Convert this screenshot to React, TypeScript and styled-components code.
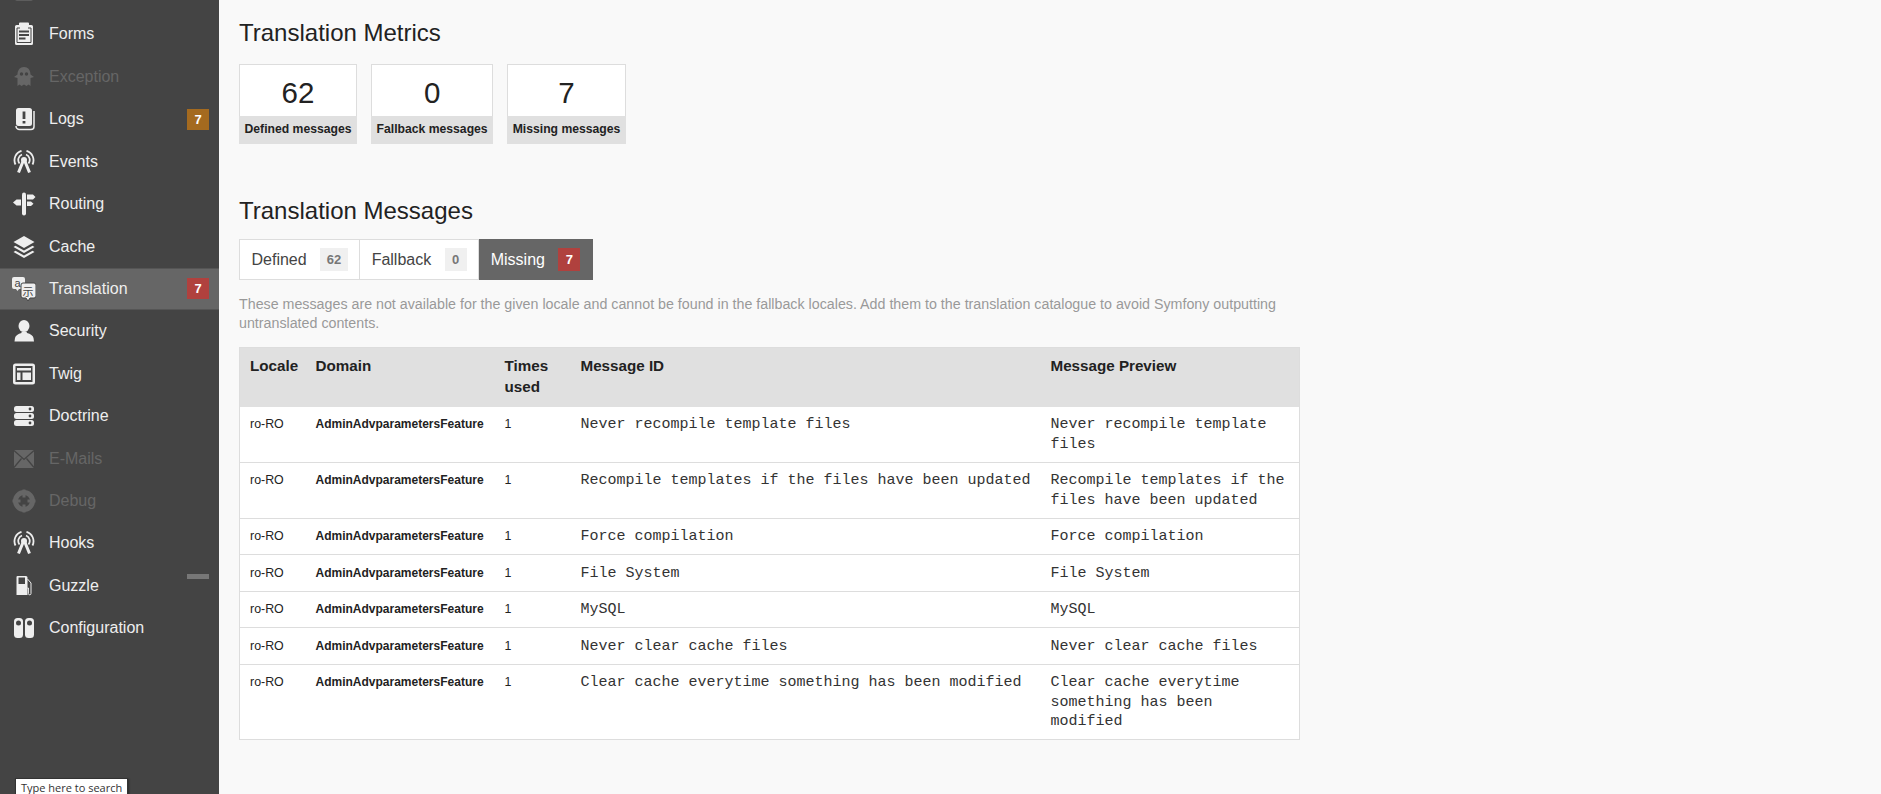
import React from 'react';
import styled, { createGlobalStyle } from 'styled-components';

const GlobalStyle = createGlobalStyle`
  html, body {
    margin: 0;
    height: 100%;
    overflow: hidden;
    background: #f9f9f9;
    color: #222;
    font-family: 'Liberation Sans', Arial, sans-serif;
  }
`;

const Page = styled.div`
  display: flex;
  height: 794px;
  overflow: hidden;
  position: relative;
`;

const Sidebar = styled.nav`
  flex: 0 0 219px;
  background: #444;
  overflow: hidden;
  padding-top: 13.2px;
`;

const MenuRow = styled.div<{ $active?: boolean; $disabled?: boolean }>`
  display: flex;
  align-items: center;
  height: 42.43px;
  box-sizing: border-box;
  padding: 0 10px 0 12px;
  font-size: 16px;
  color: ${(p) => (p.$disabled ? '#666' : '#eee')};
  background: ${(p) => (p.$active ? '#666' : 'transparent')};
  ${(p) => p.$active && 'border-top: 1px solid #555; border-bottom: 1px solid #555;'}
`;

const ClippedRow = styled(MenuRow)`
  margin-top: -29.2px;
  height: 29.2px;
  align-items: flex-end;
`;

const IconBox = styled.svg`
  width: 24px;
  height: 24px;
  flex: 0 0 24px;
  margin-right: 13px;
  fill: currentColor;
`;

const MenuLabel = styled.span`
  flex: 1;
`;

const MenuCount = styled.span<{ $tone: 'warning' | 'error' }>`
  width: 22px;
  height: 21px;
  line-height: 21px;
  text-align: center;
  font-size: 13px;
  font-weight: bold;
  color: #fff;
  background: ${(p) => (p.$tone === 'warning' ? '#a46a1f' : '#b0413e')};
`;

const EmptyCount = styled.span`
  width: 22px;
  height: 5px;
  background: #777;
  margin-top: -19px;
`;

const SearchTip = styled.div`
  position: absolute;
  left: 15px;
  top: 778px;
  width: 113px;
  height: 22px;
  box-sizing: border-box;
  background: #fff;
  border: 1px solid #333;
  padding: 1px 0 0 5px;
  font-family: 'Open Sans', sans-serif;
  font-size: 11px;
  line-height: 16px;
  color: #333;
  white-space: nowrap;
  box-shadow: 1px 1px 2px rgba(0, 0, 0, 0.4);
`;

const Main = styled.main`
  flex: 1;
  padding: 18px 0 0 20px;
`;

const SectionTitle = styled.h2`
  margin: 0 0 16px;
  font-size: 24px;
  line-height: 30px;
  font-weight: normal;
  color: #222;
`;

const Metrics = styled.div`
  display: flex;
  gap: 14px;
  margin-bottom: 52.4px;
`;

const Metric = styled.div`
  display: flex;
  flex-direction: column;
  background: #fff;
  border: 1px solid #ddd;
  border-bottom: 0;
  box-sizing: border-box;
  height: 80px;
`;

const MetricValue = styled.div`
  height: 51px;
  text-align: center;
  font-size: 29.5px;
  line-height: 55px;
`;

const MetricLabel = styled.div`
  height: 28px;
  margin: 0 -1px;
  padding: 0 5.5px;
  background: #e0e0e0;
  font-size: 12.2px;
  font-weight: bold;
  line-height: 26px;
  text-align: center;
  white-space: nowrap;
`;

const Tabs = styled.div`
  display: flex;
  width: fit-content;
  margin-top: -3.8px;
`;

const Tab = styled.div<{ $active?: boolean }>`
  display: flex;
  align-items: center;
  height: 41px;
  box-sizing: border-box;
  padding: 0 11.5px;
  gap: 13.5px;
  font-size: 16px;
  line-height: 19px;
  color: ${(p) => (p.$active ? '#fff' : '#444')};
  background: ${(p) => (p.$active ? '#666' : '#fff')};
  border: 1px solid ${(p) => (p.$active ? '#666' : '#ddd')};
  & + & {
    border-left: 0;
  }
`;

const TabBadge = styled.span<{ $error?: boolean }>`
  min-width: 22px;
  height: 23px;
  line-height: 23px;
  padding: 0 6.5px;
  box-sizing: border-box;
  text-align: center;
  font-size: 13px;
  font-weight: bold;
  color: ${(p) => (p.$error ? '#fff' : '#777')};
  background: ${(p) => (p.$error ? '#b0413e' : '#f0f0f0')};
`;

const Help = styled.p`
  width: 1060px;
  margin: 15.2px 0 14px;
  font-size: 14.25px;
  line-height: 19px;
  color: #999;
`;

const Table = styled.table`
  width: 1060px;
  table-layout: fixed;
  border-collapse: collapse;
  background: #fff;
  border: 1px solid #ddd;
`;

const Col = styled.col<{ $w: number }>`
  width: ${(p) => p.$w}px;
`;

const Th = styled.th`
  background: #e0e0e0;
  vertical-align: top;
  text-align: left;
  padding: 7px 10px 10px;
  font-size: 15.2px;
  line-height: 21px;
  font-weight: bold;
  color: #222;
  height: 59px;
  box-sizing: border-box;
`;

const Td = styled.td`
  vertical-align: top;
  padding: 8.5px 10px 7.5px;
  border-bottom: 1px solid #ddd;
  font-size: 12.4px;
  line-height: 19.5px;
  color: #222;
`;

const DomainCell = styled(Td)`
  font-size: 12px;
  font-weight: bold;
  white-space: nowrap;
`;

const MonoCell = styled(Td)`
  padding-right: 6px;
  font-family: 'Liberation Mono', 'Courier New', monospace;
  font-size: 15px;
  color: #333;
`;

const BubbleText = styled.text`
  font-family: 'Liberation Sans', 'Noto Sans CJK SC', sans-serif;
  fill: #444;
`;

const FormsIcon = () => (
  <IconBox viewBox="0 0 24 24">
    <path d="M8 0.500h8a1 1 0 0 1 1 1V3h2.500A1.500 1.500 0 0 1 21 4.500v17a1.500 1.500 0 0 1-1.500 1.500h-15A1.500 1.500 0 0 1 3 21.500v-17A1.500 1.500 0 0 1 4.500 3H7V1.500a1 1 0 0 1 1-1z" />
    <path d="M7 9.500h10M7 13h10M7 16.500h6.500" stroke="#444" strokeWidth="1.800" />
    <path d="M5 20.500V6h3M19 20.500V6h-3M5 20.500h14" fill="none" stroke="#444" strokeWidth="1" />
  </IconBox>
);

const GhostIcon = () => (
  <IconBox viewBox="0 0 24 24">
    <path d="M12 2c4 0 6.500 3 6.500 7.500l3.500 2.500-3.500 1V21l-2-1.500L14.500 21 12 19.500 9.500 21l-2-1.500-2 1.500v-8L2 12l3.500-2.500C5.500 5 8 2 12 2z" />
    <circle cx="9.500" cy="9" r="1.700" fill="#444" />
    <circle cx="14.500" cy="9" r="1.700" fill="#444" />
  </IconBox>
);

const LogsIcon = () => (
  <IconBox viewBox="0 0 24 24">
    <path d="M6.500 1h11A2.500 2.500 0 0 1 20 3.500v13a2.500 2.500 0 0 1-2.500 2.500h-11A2.500 2.500 0 0 1 4 16.500v-13A2.500 2.500 0 0 1 6.500 1z" />
    <path d="M12 4.500v7.500M12 14v2.500" stroke="#444" strokeWidth="2.800" />
    <path d="M22 4v15.500a3 3 0 0 1-3 3H7.500A3.500 3.500 0 0 1 4 19" fill="none" stroke="currentColor" strokeWidth="1.500" />
  </IconBox>
);

const AntennaIcon = () => (
  <IconBox viewBox="0 0 24 24">
    <circle cx="12" cy="10" r="3" />
    <path d="M11 11.500l-4.500 11M13 11.500l4.500 11" stroke="currentColor" strokeWidth="3" fill="none" />
    <path
      d="M7.500 13.500A5.800 5.800 0 0 1 10 4.500M16.500 13.500A5.800 5.800 0 0 0 14 4.500M3.500 14.500A9.800 9.800 0 0 1 9.500 0.800M20.500 14.500A9.800 9.800 0 0 0 14.500 0.800"
      fill="none"
      stroke="currentColor"
      strokeWidth="1.800"
    />
  </IconBox>
);

const RoutingIcon = () => (
  <IconBox viewBox="0 0 24 24">
    <rect x="10" y="0.500" width="4" height="23" rx="2" />
    <path d="M9 7.500H4.500L1 10.500l3.500 3H9z" />
    <path d="M15 2.500h6l2.500 2.500-2.500 2.500h-6zM15 9.500h4l2.500 2.300L19 14h-4z" />
  </IconBox>
);

const CacheIcon = () => (
  <IconBox viewBox="0 0 24 24">
    <path d="M12 1l10.500 6L12 13 1.500 7z" />
    <path d="M3.500 10.800L12 15.600l8.500-4.800 2 1.200L12 18 1.500 12z" />
    <path d="M3.500 15.800L12 20.600l8.500-4.800 2 1.200L12 23 1.500 17z" />
  </IconBox>
);

const TranslationIcon = () => (
  <IconBox viewBox="0 0 24 24">
    <path d="M2 0h9a2 2 0 0 1 2 2v8a2 2 0 0 1-2 2H7l-1.500 2-1.500-2H2a2 2 0 0 1-2-2V2a2 2 0 0 1 2-2z" />
    <path d="M11 6h11a2 2 0 0 1 2 2v11a2 2 0 0 1-2 2h-4l-2 3-2-3h-3a2 2 0 0 1-2-2V8a2 2 0 0 1 2-2z" stroke="#444" strokeWidth="1" />
    <BubbleText x="2.500" y="9.500" fontSize="11">a</BubbleText>
    <BubbleText x="10.500" y="18.500" fontSize="11">示</BubbleText>
  </IconBox>
);

const SecurityIcon = () => (
  <IconBox viewBox="0 0 24 24">
    <ellipse cx="12" cy="7" rx="5.500" ry="6" />
    <path d="M9.500 12.500h5l.5 1.500c3.500 1 6 2.500 6.500 5l.5 3.500H2.500l.5-3.500c.5-2.500 3-4 6.500-5z" />
  </IconBox>
);

const TwigIcon = () => (
  <IconBox viewBox="0 0 24 24">
    <path fillRule="evenodd" d="M3.500 1.500h17A2.500 2.500 0 0 1 23 4v16a2.500 2.500 0 0 1-2.500 2.500h-17A2.500 2.500 0 0 1 1 20V4a2.500 2.500 0 0 1 2.500-2.500zM3.500 4v16h17V4z" />
    <path d="M5 6h14v2.500H5zM5 10.500h3.500V18H5zM10.500 10.500H19V18h-8.500z" />
  </IconBox>
);

const DoctrineIcon = () => (
  <IconBox viewBox="0 0 24 24">
    <rect x="2" y="2" width="20" height="6" rx="2.500" />
    <rect x="2" y="9" width="20" height="6" rx="2.500" />
    <rect x="2" y="16" width="20" height="6" rx="2.500" />
    <circle cx="18" cy="5" r="1.400" fill="#444" />
    <circle cx="18" cy="12" r="1.400" fill="#444" />
    <circle cx="18" cy="19" r="1.400" fill="#444" />
  </IconBox>
);

const MailIcon = () => (
  <IconBox viewBox="0 0 24 24">
    <rect x="2" y="3" width="20" height="18" />
    <path d="M2 3.500l10 9 10-9M2 20.500l7.500-9M22 20.500l-7.500-9" fill="none" stroke="#444" strokeWidth="1.300" />
  </IconBox>
);

const DebugIcon = () => (
  <IconBox viewBox="0 0 24 24">
    <circle cx="12" cy="12" r="8.500" fill="none" stroke="currentColor" strokeWidth="5" />
    <path d="M12 0.500v8M12 15.500v8M0.500 12h8M15.500 12h8" stroke="currentColor" strokeWidth="3" />
  </IconBox>
);

const GuzzleIcon = () => (
  <IconBox viewBox="0 0 24 24">
    <path fillRule="evenodd" d="M5.500 2h8.500a1.500 1.500 0 0 1 1.500 1.500V21H4.500V3a1 1 0 0 1 1-1zM6.500 3.500V10H13V3.500z" />
    <path d="M15.500 5l3.500 4v10.500a1.300 1.300 0 0 1-2.600 0V14h-1" fill="none" stroke="currentColor" strokeWidth="1" />
  </IconBox>
);

const ConfigIcon = () => (
  <IconBox viewBox="0 0 24 24">
    <rect x="2" y="2" width="9" height="20" rx="3.500" />
    <rect x="13" y="2" width="9" height="20" rx="3.500" />
    <circle cx="6.500" cy="7" r="2.500" fill="#444" />
    <circle cx="17.500" cy="7" r="2.500" fill="#444" />
  </IconBox>
);

const SliverIcon = () => (
  <IconBox viewBox="0 0 24 24">
    <rect x="3" y="4" width="18" height="7.800" rx="2" />
  </IconBox>
);

const messages = [
  'Never recompile template files',
  'Recompile templates if the files have been updated',
  'Force compilation',
  'File System',
  'MySQL',
  'Never clear cache files',
  'Clear cache everytime something has been modified',
];

export default function App() {
  return (
    <Page>
      <GlobalStyle />
      <Sidebar>
        <ClippedRow $disabled>
          <SliverIcon />
        </ClippedRow>
        <MenuRow><FormsIcon /><MenuLabel>Forms</MenuLabel></MenuRow>
        <MenuRow $disabled><GhostIcon /><MenuLabel>Exception</MenuLabel></MenuRow>
        <MenuRow><LogsIcon /><MenuLabel>Logs</MenuLabel><MenuCount $tone="warning">7</MenuCount></MenuRow>
        <MenuRow><AntennaIcon /><MenuLabel>Events</MenuLabel></MenuRow>
        <MenuRow><RoutingIcon /><MenuLabel>Routing</MenuLabel></MenuRow>
        <MenuRow><CacheIcon /><MenuLabel>Cache</MenuLabel></MenuRow>
        <MenuRow $active><TranslationIcon /><MenuLabel>Translation</MenuLabel><MenuCount $tone="error">7</MenuCount></MenuRow>
        <MenuRow><SecurityIcon /><MenuLabel>Security</MenuLabel></MenuRow>
        <MenuRow><TwigIcon /><MenuLabel>Twig</MenuLabel></MenuRow>
        <MenuRow><DoctrineIcon /><MenuLabel>Doctrine</MenuLabel></MenuRow>
        <MenuRow $disabled><MailIcon /><MenuLabel>E-Mails</MenuLabel></MenuRow>
        <MenuRow $disabled><DebugIcon /><MenuLabel>Debug</MenuLabel></MenuRow>
        <MenuRow><AntennaIcon /><MenuLabel>Hooks</MenuLabel></MenuRow>
        <MenuRow><GuzzleIcon /><MenuLabel>Guzzle</MenuLabel><EmptyCount /></MenuRow>
        <MenuRow><ConfigIcon /><MenuLabel>Configuration</MenuLabel></MenuRow>
      </Sidebar>
      <SearchTip>Type here to search</SearchTip>
      <Main>
        <SectionTitle>Translation Metrics</SectionTitle>
        <Metrics>
          <Metric><MetricValue>62</MetricValue><MetricLabel>Defined messages</MetricLabel></Metric>
          <Metric><MetricValue>0</MetricValue><MetricLabel>Fallback messages</MetricLabel></Metric>
          <Metric><MetricValue>7</MetricValue><MetricLabel>Missing messages</MetricLabel></Metric>
        </Metrics>
        <SectionTitle>Translation Messages</SectionTitle>
        <Tabs>
          <Tab>Defined <TabBadge>62</TabBadge></Tab>
          <Tab>Fallback <TabBadge>0</TabBadge></Tab>
          <Tab $active>Missing <TabBadge $error>7</TabBadge></Tab>
        </Tabs>
        <Help>
          These messages are not available for the given locale and cannot be found in the fallback locales. Add them to the translation catalogue to avoid Symfony outputting untranslated contents.
        </Help>
        <Table>
          <colgroup>
            <Col $w={66} />
            <Col $w={189} />
            <Col $w={76} />
            <Col $w={470} />
            <Col $w={259} />
          </colgroup>
          <thead>
            <tr>
              <Th>Locale</Th>
              <Th>Domain</Th>
              <Th>Times used</Th>
              <Th>Message ID</Th>
              <Th>Message Preview</Th>
            </tr>
          </thead>
          <tbody>
            {messages.map((text) => (
              <tr key={text}>
                <Td>ro-RO</Td>
                <DomainCell>AdminAdvparametersFeature</DomainCell>
                <Td>1</Td>
                <MonoCell>{text}</MonoCell>
                <MonoCell>{text}</MonoCell>
              </tr>
            ))}
          </tbody>
        </Table>
      </Main>
    </Page>
  );
}
